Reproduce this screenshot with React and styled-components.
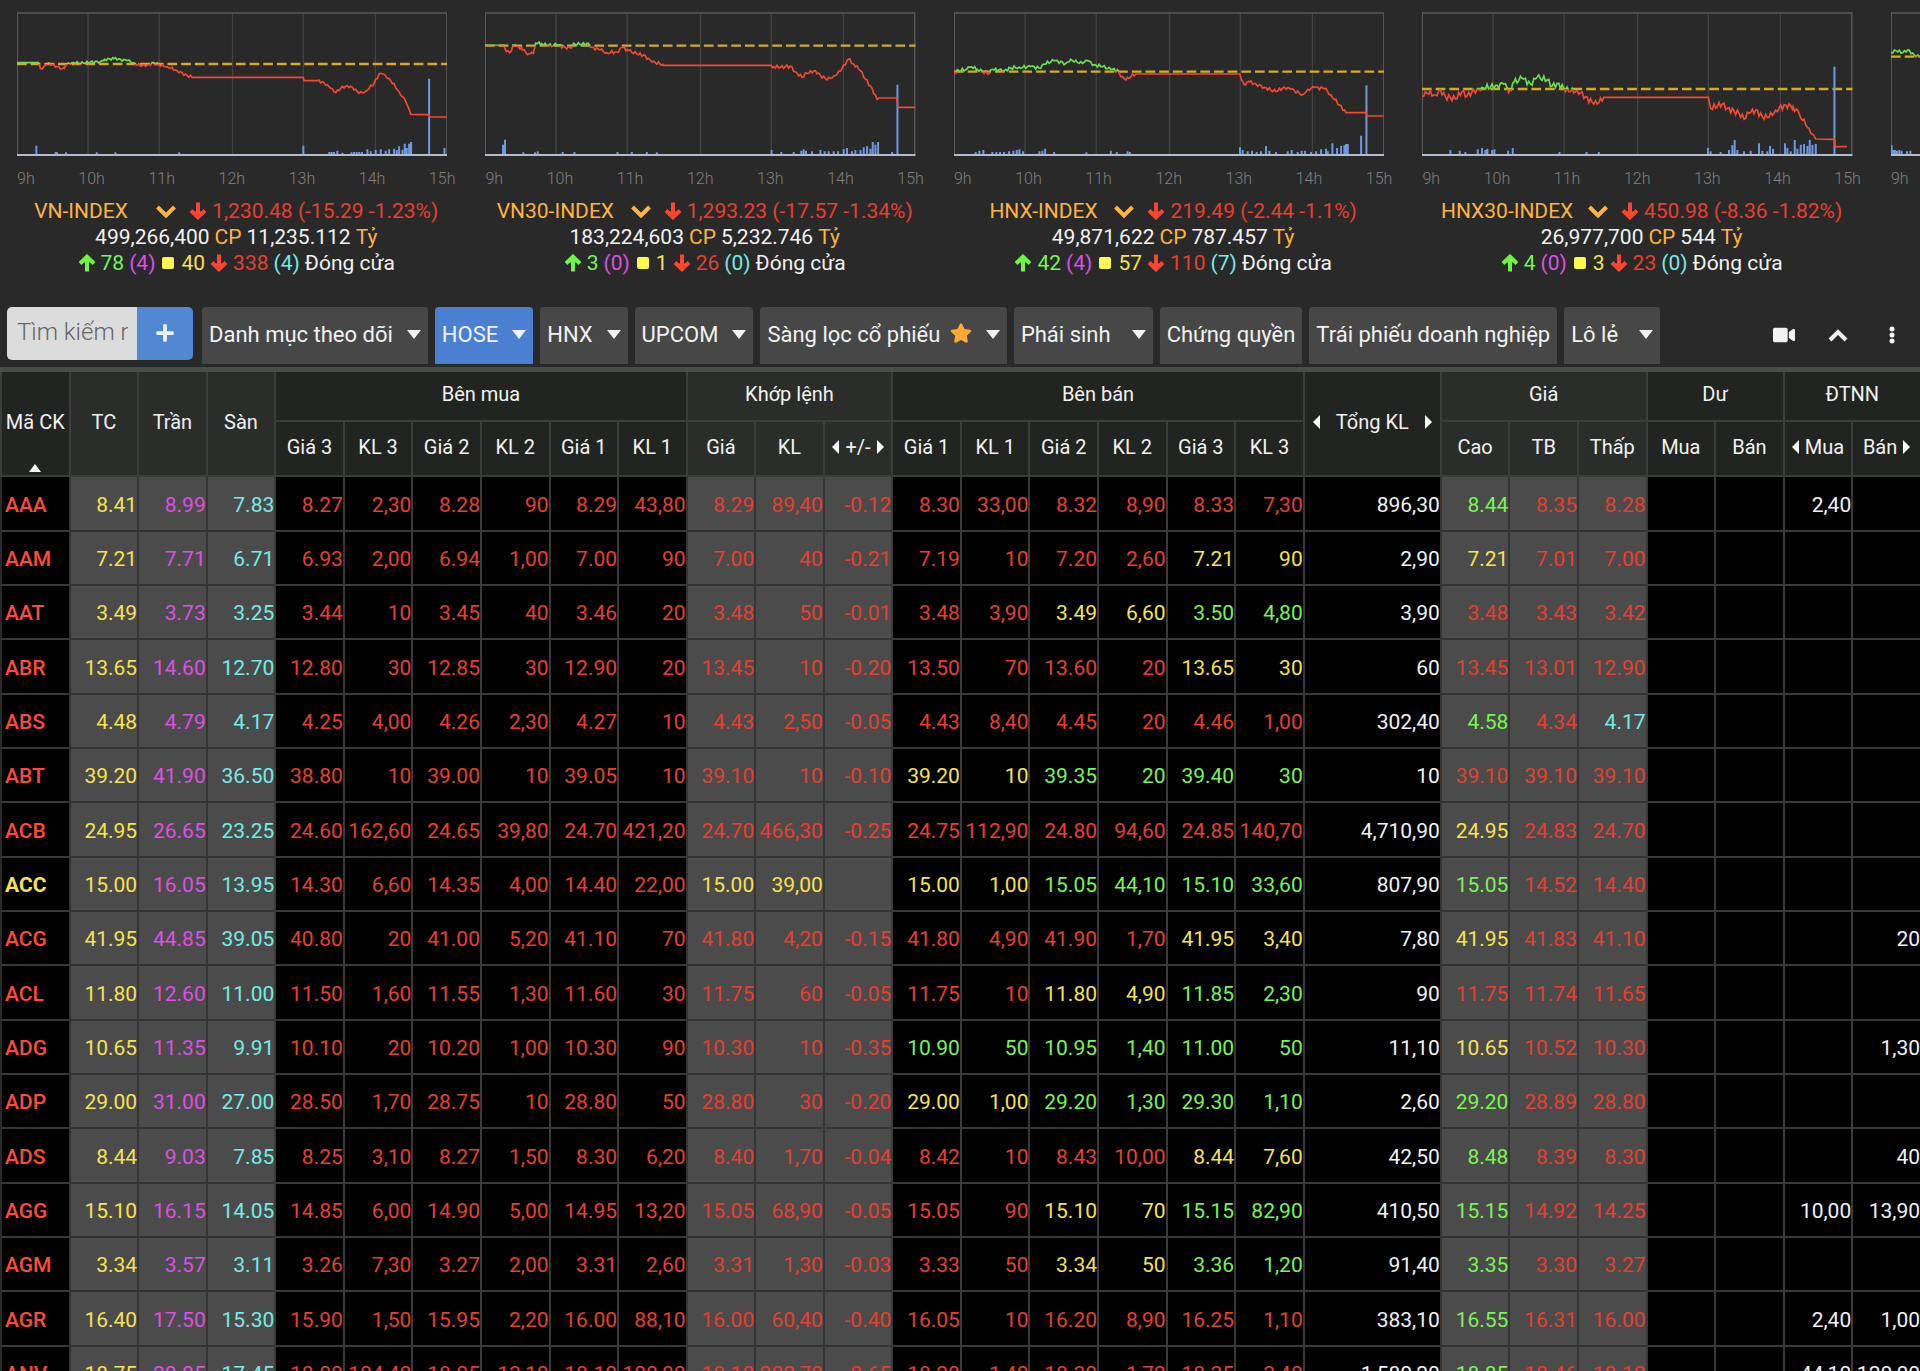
import { useId, useState } from "react"
import styled, { createGlobalStyle, css } from "styled-components"
import { FaPlus, FaStar, FaVideo } from "react-icons/fa"

const colors = {
  bg: "#292929",
  white: "#f2f2f2",
  gold: "#ffb340",
  up: "#78f550",
  down: "#e5402f",
  ref: "#f7e250",
  ceil: "#de4fe6",
  floor: "#74ebe8",
}

const indices = [
  {
    name: "VN-INDEX", width: 142, value: "1,230.48 (-15.29 -1.23%)", volume: "499,266,400", money: "11,235.112",
    up: 78, ceil: 4, same: 40, down: 338, floor: 4, base: 192, noise: 4,
    line: "0,188 64,188 70,206 80,200 90,192 105,194 120,200 130,208 142,205 150,192 165,188 200,190 220,186 250,185 262,178 290,176 310,178 330,182 350,188 360,196 390,196 410,188 425,194 450,200 480,212 510,227 530,232 858,232 860,242 900,242 920,248 940,265 955,278 970,265 990,257 1005,262 1025,280 1045,274 1070,250 1085,222 1095,222 1115,235 1145,275 1165,305 1180,343 1235,344 1236,351 1290,351",
    bars: "58,27 116,8 120,7 147,7 239,7 295,7 486,7 858,27 936,8 943,8 950,8 960,12 975,6 1002,7 1010,8 1018,8 1026,8 1034,8 1050,16 1060,10 1075,14 1090,16 1105,12 1115,16 1130,18 1138,14 1145,25 1155,15 1162,33 1168,20 1175,33 1181,38 1235,228 1281,20",
  },
  {
    name: "VN30-INDEX", width: 154, value: "1,293.23 (-17.57 -1.34%)", volume: "183,224,603", money: "5,232.746",
    up: 3, ceil: 0, same: 1, down: 26, floor: 0, base: 137, noise: 5,
    line: "0,136 56,136 64,155 74,158 86,138 100,140 112,150 130,162 145,160 152,130 170,131 190,138 215,134 240,142 258,144 265,130 285,134 310,130 320,142 345,150 365,158 395,156 412,142 430,152 455,162 475,165 500,186 533,193 535,196 857,196 865,200 885,202 915,198 930,215 950,232 965,220 990,212 1005,225 1025,240 1045,228 1065,214 1088,178 1105,192 1125,212 1140,238 1160,265 1175,298 1180,294 1234,294 1237,322 1290,322",
    bars: "54,30 60,45 115,7 150,7 158,10 233,8 268,8 397,8 440,8 485,8 515,7 859,14 888,8 925,8 948,12 955,16 962,12 980,10 1005,14 1018,10 1030,10 1045,10 1058,10 1075,16 1085,20 1100,10 1110,14 1125,14 1135,22 1145,25 1155,18 1162,38 1170,30 1178,38 1220,8 1236,210",
  },
  {
    name: "HNX-INDEX", width: 145, value: "219.49 (-2.44 -1.1%)", volume: "49,871,622", money: "787.457",
    up: 42, ceil: 4, same: 57, down: 110, floor: 7, base: 215, noise: 5,
    line: "0,218 15,212 38,208 52,200 70,208 85,214 105,222 115,208 150,212 170,204 195,202 230,200 260,205 270,192 300,182 335,190 350,178 370,188 385,190 400,182 420,194 445,200 470,208 492,212 500,230 515,240 530,230 545,222 857,222 868,252 885,246 905,252 930,262 965,275 990,262 1010,268 1045,284 1060,268 1080,262 1110,266 1130,285 1155,315 1175,338 1235,338 1237,348 1290,348",
    bars: "65,8 76,12 88,14 115,8 127,8 138,8 150,8 165,10 178,12 188,14 196,16 207,10 256,10 265,12 273,18 300,8 397,7 470,12 488,8 520,10 527,8 857,22 865,14 880,10 893,12 907,8 920,10 935,26 945,12 965,8 1000,10 1012,14 1030,8 1042,12 1052,12 1070,8 1085,10 1100,16 1115,18 1120,10 1134,34 1148,20 1160,26 1170,28 1175,32 1180,32 1220,57 1236,208",
  },
  {
    name: "HNX30-INDEX", width: 167, value: "450.98 (-8.36 -1.82%)", volume: "26,977,700", money: "544",
    up: 4, ceil: 0, same: 3, down: 23, floor: 0, base: 267, noise: 9,
    line: "0,288 10,275 40,285 55,268 70,290 100,297 120,275 135,288 150,275 165,268 180,262 205,262 225,256 245,252 262,272 275,248 300,235 325,252 345,232 375,240 390,258 405,250 425,265 445,275 465,272 490,290 515,312 530,308 545,292 858,292 865,325 900,312 915,325 950,340 965,358 980,340 1000,330 1020,350 1040,352 1060,330 1090,315 1112,320 1130,340 1150,375 1165,400 1180,417 1236,418 1238,440 1274,440",
    bars: "85,14 113,12 130,8 167,16 180,20 190,14 196,18 210,14 217,16 258,12 272,20 412,8 493,8 530,8 857,20 865,10 895,8 920,14 930,28 937,44 945,14 965,10 985,12 1010,34 1020,12 1035,10 1043,26 1052,18 1088,34 1095,20 1105,10 1117,44 1125,18 1135,30 1145,32 1155,26 1162,44 1170,30 1180,32 1236,264",
  },
  {
    base: 170, noise: 4,
    line: "0,158 15,152 35,158 50,150 70,165 90,172",
    bars: "2,28 6,14 12,14 18,12 25,14 32,12 48,10 58,12",
  },
]

const hours = ["9h", "10h", "11h", "12h", "13h", "14h", "15h"]

const tabs = [
  { label: "Danh mục theo dõi", menu: true },
  { label: "HOSE", menu: true },
  { label: "HNX", menu: true },
  { label: "UPCOM", menu: true },
  { label: "Sàng lọc cổ phiếu", menu: true, star: true },
  { label: "Phái sinh", menu: true, wide: true },
  { label: "Chứng quyền" },
  { label: "Trái phiếu doanh nghiệp" },
  { label: "Lô lẻ", menu: true, wide: true },
]

// code, tc, ceiling, floor, buy x6, matched x3, sell x6, total, high, avg, low, left x2, foreign x2
const quotes = `
AAA 8.41 8.99 7.83 8.27 2,30 8.28 90 8.29 43,80 8.29 89,40 -0.12 8.30 33,00 8.32 8,90 8.33 7,30 896,30 8.44 8.35 8.28 _ _ 2,40 _
AAM 7.21 7.71 6.71 6.93 2,00 6.94 1,00 7.00 90 7.00 40 -0.21 7.19 10 7.20 2,60 7.21 90 2,90 7.21 7.01 7.00 _ _ _ _
AAT 3.49 3.73 3.25 3.44 10 3.45 40 3.46 20 3.48 50 -0.01 3.48 3,90 3.49 6,60 3.50 4,80 3,90 3.48 3.43 3.42 _ _ _ _
ABR 13.65 14.60 12.70 12.80 30 12.85 30 12.90 20 13.45 10 -0.20 13.50 70 13.60 20 13.65 30 60 13.45 13.01 12.90 _ _ _ _
ABS 4.48 4.79 4.17 4.25 4,00 4.26 2,30 4.27 10 4.43 2,50 -0.05 4.43 8,40 4.45 20 4.46 1,00 302,40 4.58 4.34 4.17 _ _ _ _
ABT 39.20 41.90 36.50 38.80 10 39.00 10 39.05 10 39.10 10 -0.10 39.20 10 39.35 20 39.40 30 10 39.10 39.10 39.10 _ _ _ _
ACB 24.95 26.65 23.25 24.60 162,60 24.65 39,80 24.70 421,20 24.70 466,30 -0.25 24.75 112,90 24.80 94,60 24.85 140,70 4,710,90 24.95 24.83 24.70 _ _ _ _
ACC 15.00 16.05 13.95 14.30 6,60 14.35 4,00 14.40 22,00 15.00 39,00 _ 15.00 1,00 15.05 44,10 15.10 33,60 807,90 15.05 14.52 14.40 _ _ _ _
ACG 41.95 44.85 39.05 40.80 20 41.00 5,20 41.10 70 41.80 4,20 -0.15 41.80 4,90 41.90 1,70 41.95 3,40 7,80 41.95 41.83 41.10 _ _ _ 20
ACL 11.80 12.60 11.00 11.50 1,60 11.55 1,30 11.60 30 11.75 60 -0.05 11.75 10 11.80 4,90 11.85 2,30 90 11.75 11.74 11.65 _ _ _ _
ADG 10.65 11.35 9.91 10.10 20 10.20 1,00 10.30 90 10.30 10 -0.35 10.90 50 10.95 1,40 11.00 50 11,10 10.65 10.52 10.30 _ _ _ 1,30
ADP 29.00 31.00 27.00 28.50 1,70 28.75 10 28.80 50 28.80 30 -0.20 29.00 1,00 29.20 1,30 29.30 1,10 2,60 29.20 28.89 28.80 _ _ _ _
ADS 8.44 9.03 7.85 8.25 3,10 8.27 1,50 8.30 6,20 8.40 1,70 -0.04 8.42 10 8.43 10,00 8.44 7,60 42,50 8.48 8.39 8.30 _ _ _ 40
AGG 15.10 16.15 14.05 14.85 6,00 14.90 5,00 14.95 13,20 15.05 68,90 -0.05 15.05 90 15.10 70 15.15 82,90 410,50 15.15 14.92 14.25 _ _ 10,00 13,90
AGM 3.34 3.57 3.11 3.26 7,30 3.27 2,00 3.31 2,60 3.31 1,30 -0.03 3.33 50 3.34 50 3.36 1,20 91,40 3.35 3.30 3.27 _ _ _ _
AGR 16.40 17.50 15.30 15.90 1,50 15.95 2,20 16.00 88,10 16.00 60,40 -0.40 16.05 10 16.20 8,90 16.25 1,10 383,10 16.55 16.31 16.00 _ _ 2,40 1,00
ANV 18.75 20.05 17.45 18.00 104,40 18.05 13,10 18.10 100,80 18.10 202,70 -0.65 18.20 1,40 18.30 1,70 18.35 3,40 1,580,20 18.85 18.46 18.10 _ _ 44,10 120,00
`.trim().split("\n").map((row) => row.split(" "))

function toneOf(row, col) {
  const [, ref, ceil, floor] = row
  if (col === 1) return "ref"
  if (col === 2) return "ceil"
  if (col === 3) return "floor"
  if (col === 19 || col > 22) return "white"
  let price = row[col]
  if (col === 0 || (col >= 10 && col <= 12)) price = row[10]
  else if (col < 19 && (col < 10 ? col % 2 === 1 : col % 2 === 0)) price = row[col - 1]
  if (price === ceil) return "ceil"
  if (price === floor) return "floor"
  if (Number(price) === Number(ref)) return "ref"
  return Number(price) > Number(ref) ? "up" : "down"
}

const isShaded = (col) => (col >= 1 && col <= 3) || (col >= 10 && col <= 12) || (col >= 20 && col <= 22)

function withTicks(line, noise) {
  const points = line.split(" ").map((p) => p.split(",").map(Number))
  const out = []
  points.forEach(([x, y], i) => {
    out.push(`${x},${y}`)
    const next = points[i + 1]
    if (!next || next[0] - x > 35) return
    for (let px = x + 5; px < next[0]; px += 5) {
      const mid = y + ((next[1] - y) * (px - x)) / (next[0] - x)
      out.push(`${px},${Math.round(mid + Math.sin(px * 1.7) * noise)}`)
    }
  })
  return out.join(" ")
}

function IndexChart({ base, line, bars, noise }) {
  const id = useId()
  const points = withTicks(line, noise)
  const volume = bars.split(" ").map((b) => b.split(",")).map(([x, h]) => `M${x} 464v-${h}`).join("")
  return (
    <Chart viewBox="0 0 1290 468" preserveAspectRatio="none" aria-hidden="true">
      <clipPath id={`${id}a`}><rect x="0" y="0" width="1290" height={base} /></clipPath>
      <clipPath id={`${id}b`}><rect x="0" y={base} width="1290" height="468" /></clipPath>
      <path d="M213 39V464M426 39V464M646 39V464M858 39V464M1074 39V464" stroke="#434343" strokeWidth="4" />
      <path d="M1 464V39H1288V464" stroke="#5a5a5a" strokeWidth="4" />
      <path d={`M0 ${base}H1290`} stroke="#d3aa2e" strokeWidth="7" strokeDasharray="29 12" />
      <path d={volume} stroke="#6c98e6" strokeWidth="6" />
      <path d="M0 465H1290" stroke="#b4bccb" strokeWidth="6" />
      <polyline points={points} stroke="#6be04c" strokeWidth="5" clipPath={`url(#${id}a)`} />
      <polyline points={points} stroke="#f04a35" strokeWidth="5" clipPath={`url(#${id}b)`} />
    </Chart>
  )
}

const Arrow = ({ down }) => (
  <ArrowIcon viewBox="0 0 18 18" $down={down} aria-hidden="true">
    <path d="M9 17.500V4M2 9.500L9 2.700L16 9.500" />
    <path d="M9 2.500L14 8H4Z" fill="currentColor" strokeWidth="1" />
  </ArrowIcon>
)

const Caret = () => (
  <CaretIcon viewBox="0 0 14 9" aria-hidden="true"><path d="M0 0H14L7 9Z" /></CaretIcon>
)

function IndexCard({ index }) {
  const shownHours = index.name ? hours : hours.slice(0, 1)
  return (
    <Card>
      <IndexChart {...index} />
      <Hours>{shownHours.map((h) => <span key={h}>{h}</span>)}</Hours>
      {index.name && (
        <Info>
          <Line>
            <Picker $width={index.width}>
              <select aria-label="Chỉ số" defaultValue={index.name}>
                <option>{index.name}</option>
              </select>
              <svg viewBox="0 0 20 13" aria-hidden="true"><path d="M1.500 2L10 10.500L18.500 2" /></svg>
            </Picker>
            <Tone $tone="down"><Arrow down /></Tone>
            <Tone $tone="down">{index.value}</Tone>
          </Line>
          <Line>
            <Tone $tone="white">{index.volume}</Tone>
            <Tone $tone="gold">CP</Tone>
            <Tone $tone="white">{index.money}</Tone>
            <Tone $tone="gold">Tỷ</Tone>
          </Line>
          <Line>
            <Tone $tone="up"><Arrow /></Tone>
            <Tone $tone="up">{index.up}</Tone>
            <Tone $tone="ceil">({index.ceil})</Tone>
            <Square />
            <Tone $tone="ref">{index.same}</Tone>
            <Tone $tone="down"><Arrow down /></Tone>
            <Tone $tone="down">{index.down}</Tone>
            <Tone $tone="floor">({index.floor})</Tone>
            <Tone $tone="white">Đóng cửa</Tone>
          </Line>
        </Info>
      )}
    </Card>
  )
}

function Toolbar() {
  const [active, setActive] = useState("HOSE")
  return (
    <Bar>
      <Search>
        <input type="text" placeholder="Tìm kiếm mã" aria-label="Tìm kiếm mã" />
        <button type="button" aria-label="Thêm"><FaPlus size={20} /></button>
      </Search>
      <Tabs>
        {tabs.map((tab) => (
          <Tab
            key={tab.label}
            type="button"
            $active={tab.label === active}
            $wide={tab.wide}
            aria-haspopup={tab.menu ? "menu" : undefined}
            onClick={() => setActive(tab.label)}
          >
            <span>{tab.label} {tab.star && <Star size={22} />}</span>
            {tab.menu && <Caret />}
          </Tab>
        ))}
      </Tabs>
      <Tools>
        <IconButton type="button" aria-label="Video"><FaVideo size={22} /></IconButton>
        <IconButton type="button" aria-label="Thu gọn">
          <svg width="20" height="16" viewBox="0 0 20 16"><path d="M2 13L10 5L18 13" stroke="currentColor" strokeWidth="4" fill="none" /></svg>
        </IconButton>
        <IconButton type="button" aria-label="Thêm tùy chọn">
          <svg width="6" height="18" viewBox="0 0 6 18" fill="currentColor"><circle cx="3" cy="3" r="2.500" /><circle cx="3" cy="9" r="2.500" /><circle cx="3" cy="15" r="2.500" /></svg>
        </IconButton>
      </Tools>
    </Bar>
  )
}

const Left = () => <Side viewBox="0 0 8 14" aria-hidden="true"><path d="M7 0V14L0 7Z" /></Side>
const Right = () => <Side viewBox="0 0 8 14" aria-hidden="true"><path d="M1 0V14L8 7Z" /></Side>

function Board() {
  return (
    <Table>
      <colgroup>
        {quotes[0].map((_, i) => <Col key={i} $double={i === 19} />)}
      </colgroup>
      <thead>
        <tr>
          <Th rowSpan={2}>Mã CK<SortUp viewBox="0 0 12 8" aria-hidden="true"><path d="M0 8L6 0L12 8Z" /></SortUp></Th>
          <Th rowSpan={2} $light>TC</Th>
          <Th rowSpan={2} $light>Trần</Th>
          <Th rowSpan={2} $light>Sàn</Th>
          <Th colSpan={6}>Bên mua</Th>
          <Th colSpan={3} $light>Khớp lệnh</Th>
          <Th colSpan={6}>Bên bán</Th>
          <Th rowSpan={2}><Shift $spread><Left />Tổng KL<Right /></Shift></Th>
          <Th colSpan={3} $light>Giá</Th>
          <Th colSpan={2}>Dư</Th>
          <Th colSpan={2}>ĐTNN</Th>
        </tr>
        <tr>
          {["Giá 3", "KL 3", "Giá 2", "KL 2", "Giá 1", "KL 1"].map((t) => <Th key={t}>{t}</Th>)}
          <Th $light>Giá</Th>
          <Th $light>KL</Th>
          <Th $light><Shift><Left />+/-<Right /></Shift></Th>
          {["Giá 1", "KL 1", "Giá 2", "KL 2", "Giá 3", "KL 3"].map((t) => <Th key={t}>{t}</Th>)}
          <Th $light>Cao</Th>
          <Th $light>TB</Th>
          <Th $light>Thấp</Th>
          <Th>Mua</Th>
          <Th>Bán</Th>
          <Th><Shift><Left />Mua</Shift></Th>
          <Th><Shift>Bán<Right /></Shift></Th>
        </tr>
      </thead>
      <tbody>
        {quotes.map((row) => (
          <Row key={row[0]}>
            {row.map((value, col) =>
              col === 0 ? (
                <Code key={col} scope="row" $tone={toneOf(row, 0)}>{value}</Code>
              ) : (
                <Td key={col} $tone={toneOf(row, col)} $shaded={isShaded(col)}>{value === "_" ? "" : value}</Td>
              )
            )}
          </Row>
        ))}
      </tbody>
    </Table>
  )
}

function App() {
  return (
    <>
      <GlobalStyle />
      <Page>
        <Strip>
          {indices.map((index, i) => <IndexCard key={i} index={index} />)}
        </Strip>
        <Toolbar />
        <BoardArea><Board /></BoardArea>
      </Page>
    </>
  )
}

const GlobalStyle = createGlobalStyle`
  *{
    box-sizing:border-box;
  }
  body{
    margin:0;
    background:${colors.bg};
    color:${colors.white};
    font-family:Roboto, "Noto Sans", sans-serif;
    font-size:21px;
  }
  button, input, select{
    font:inherit;
    color:inherit;
    border:0;
  }
  button{
    cursor:pointer;
  }
`

const Page = styled.div`
  display:flex;
  flex-direction:column;
  height:100vh;
  overflow:hidden;
`

const Strip = styled.section`
  display:flex;
  overflow:hidden;
  flex:none;
`

const Card = styled.article`
  flex:0 0 24.4%;
  min-width:0;
`

const Chart = styled.svg`
  display:block;
  width:calc(100% - 38px);
  height:156px;
  margin-left:17px;
  fill:none;
`

const Hours = styled.div`
  display:flex;
  justify-content:space-between;
  margin:11px 13px 7px 17px;
  font-size:16px;
  font-weight:300;
  line-height:24px;
  color:#808080;
`

const Info = styled.div`
  padding-left:4px;
`

const Line = styled.div`
  display:flex;
  align-items:center;
  justify-content:center;
  gap:5px;
  height:26px;
  white-space:nowrap;
`

const Tone = styled.span`
  display:inline-flex;
  color:${(p) => colors[p.$tone]};
`

const Picker = styled.span`
  position:relative;
  width:${(p) => p.$width}px;
  margin-right:8px;
  color:${colors.gold};
  select{
    width:100%;
    padding:0;
    background:none;
    appearance:none;
  }
  svg{
    position:absolute;
    right:0;
    top:6px;
    width:20px;
    height:13px;
    fill:none;
    stroke:currentColor;
    stroke-width:4;
    pointer-events:none;
  }
`

const ArrowIcon = styled.svg`
  width:18px;
  height:18px;
  fill:none;
  stroke:currentColor;
  stroke-width:4;
  color:${(p) => (p.$down ? "#ff4530" : "#6ff542")};
  ${(p) => p.$down && css`transform:rotate(180deg);`}
`

const Square = styled.i`
  width:12px;
  height:12px;
  margin:0 2px;
  border-radius:2px;
  background:#fdf84e;
`

const Bar = styled.nav`
  display:flex;
  align-items:flex-start;
  flex:none;
  padding:31px 20px 3px 7px;
  border-bottom:5px solid #4b4b4b;
`

const Search = styled.div`
  display:flex;
  width:186px;
  height:53px;
  margin-right:9px;
  border-radius:5px;
  overflow:hidden;
  input{
    flex:1;
    min-width:0;
    padding:0 9px 4px 10px;
    background:#dcdcdc;
    font-size:24px;
    font-weight:300;
    color:#333;
  }
  input::placeholder{
    color:#666;
    opacity:1;
  }
  button{
    display:flex;
    align-items:center;
    justify-content:center;
    width:56px;
    padding:0 0 2px;
    background:#5288d3;
  }
`

const Tabs = styled.div`
  display:flex;
  gap:7px;
`

const Tab = styled.button`
  display:flex;
  align-items:center;
  gap:${(p) => (p.$wide ? 21 : 14)}px;
  height:57px;
  padding:0 7px 2px;
  border-radius:4px 4px 0 0;
  background:${(p) => (p.$active ? "#4b7fd1" : "#474747")};
  font-size:22px;
  white-space:nowrap;
`

const Star = styled(FaStar)`
  margin-left:4px;
  vertical-align:-2px;
  color:#ffa938;
`

const CaretIcon = styled.svg`
  width:14px;
  height:9px;
  fill:currentColor;
`

const Tools = styled.div`
  display:flex;
  align-items:center;
  gap:10px;
  height:57px;
  margin-left:auto;
  margin-right:-14px;
`

const IconButton = styled.button`
  display:flex;
  align-items:center;
  justify-content:center;
  width:44px;
  height:44px;
  padding:0 0 2px;
  background:none;
`

const BoardArea = styled.main`
  flex:1;
  min-height:0;
  overflow:hidden;
  background:#000;
`

const Table = styled.table`
  width:100%;
  table-layout:fixed;
  border-collapse:separate;
  border-spacing:0;
  thead tr:first-child{
    height:50px;
  }
  thead tr:last-child{
    height:55px;
  }
`

const Col = styled.col`
  width:${(p) => (p.$double ? "calc(200% / 28)" : "calc(100% / 28)")};
`

const Th = styled.th`
  position:relative;
  padding:0 0 4px;
  border-left:2px solid #3c3e3c;
  border-bottom:2px solid #3c3e3c;
  background:${(p) => (p.$light ? "#2a2d2a" : "#212421")};
  font-size:20px;
  font-weight:400;
  white-space:nowrap;
`

const SortUp = styled.svg`
  position:absolute;
  left:50%;
  bottom:3px;
  width:12px;
  height:8px;
  margin-left:-6px;
  fill:#fff;
`

const Shift = styled.span`
  display:flex;
  align-items:center;
  justify-content:${(p) => (p.$spread ? "space-between" : "center")};
  gap:5px;
  padding:${(p) => (p.$spread ? "0 8px" : 0)};
`

const Side = styled.svg`
  width:8px;
  height:14px;
  fill:#fff;
`

const Row = styled.tr`
  height:54px;
  &:nth-child(3n + 1){
    height:55px;
  }
`

const Td = styled.td`
  padding:2px 0 0;
  border-left:2px solid ${(p) => (p.$shaded ? "#353535" : "#3a3a3a")};
  border-bottom:2px solid ${(p) => (p.$shaded ? "#333" : "#383838")};
  background:${(p) => (p.$shaded ? "#4b4b4b" : "#000")};
  color:${(p) => colors[p.$tone]};
  text-align:right;
  white-space:nowrap;
`

const Code = styled.th`
  padding:2px 0 0 3px;
  border-left:2px solid #2a2a2a;
  border-bottom:2px solid #383838;
  background:#000;
  color:${(p) => (p.$tone === "down" ? "#ff4a38" : colors[p.$tone])};
  font-weight:${(p) => (p.$tone === "down" ? 500 : 700)};
  text-align:left;
`

export default App
